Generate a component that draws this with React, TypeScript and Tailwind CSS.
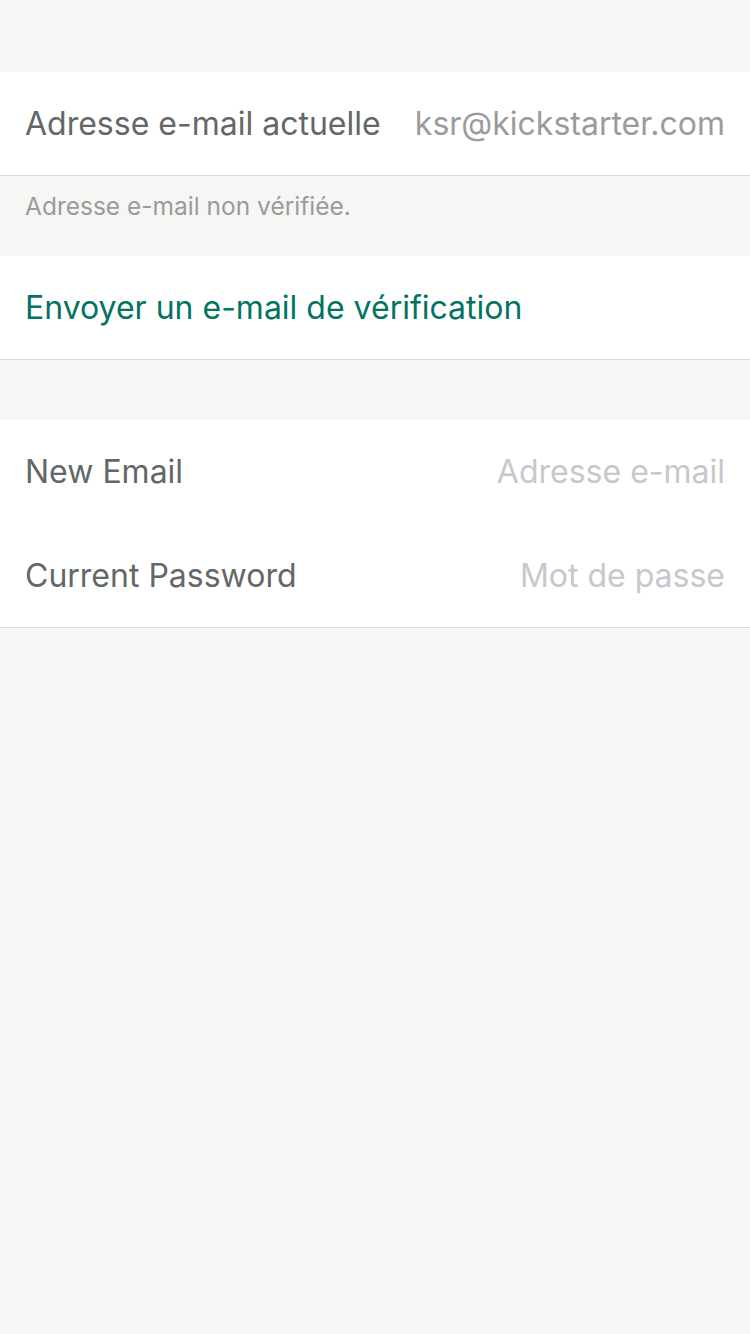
import React from "react";

const font = { fontFamily: "Inter, Roboto, 'Noto Sans', sans-serif" };

export default function App() {
  return (
    <div className="min-h-[1334px] w-[750px] bg-[#f6f6f4]" style={font}>
      <div className="h-[72px]" />
      <div className="flex h-[104px] items-center justify-between border-b border-[#dcdcdc] bg-white px-[25px]">
        <span className="text-[32px] text-[#636767]">Adresse e-mail actuelle</span>
        <span className="text-[32px] text-[#9b9b9b]">ksr@kickstarter.com</span>
      </div>
      <div className="flex h-[80px] items-start px-[25px] pt-[12px]">
        <span className="text-[24.5px] text-[#9b9b9b]">Adresse e-mail non vérifiée.</span>
      </div>
      <div className="flex h-[104px] items-center border-b border-[#dcdcdc] bg-white px-[25px]">
        <span className="text-[32px] text-[#037362]">Envoyer un e-mail de vérification</span>
      </div>
      <div className="h-[60px]" />
      <div className="border-b border-[#dcdcdc] bg-white">
        <div className="flex h-[104px] items-center justify-between px-[25px]">
          <span className="text-[32px] text-[#636767]">New Email</span>
          <span className="text-[32px] text-[#c7c7cd]">Adresse e-mail</span>
        </div>
        <div className="flex h-[103px] items-center justify-between px-[25px]">
          <span className="text-[32px] text-[#636767]">Current Password</span>
          <span className="text-[32px] text-[#c7c7cd]">Mot de passe</span>
        </div>
      </div>
    </div>
  );
}
